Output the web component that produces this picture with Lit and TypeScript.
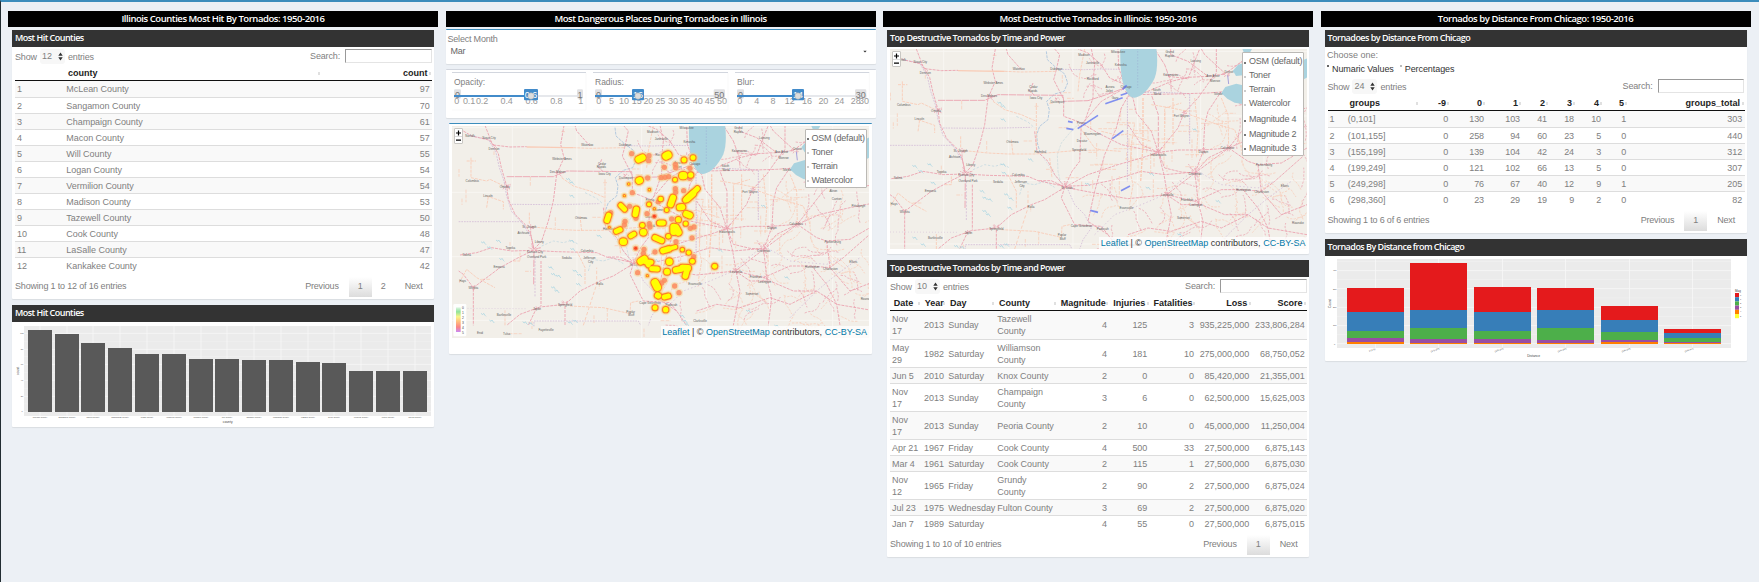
import { LitElement, html, svg, css } from "lit";
import { customElement, property } from "lit/decorators.js";

type Col = { label: string; width: number; align?: "r"; sort?: boolean };
type Line = { c: string; p: string; w?: number; d?: string };

const RED = "#eba0ae";
const ORANGE = "#f9cbb6";
const PURPLE = "#d5bfd9";
const RIVER = "#aac4dd";

/* ---------- base map geometry ---------- */

const borders: Line[] = [
  { c: PURPLE, p: "6,292 195,292", d: "5 3" },
  { c: PURPLE, p: "165,240 300,241 430,238", d: "5 3" },
  { c: PURPLE, p: "718,150 719,300 718,400", d: "5 3", w: 3 },
  { c: PURPLE, p: "738,133 820,133 905,137 905,290", d: "5 3", w: 3 },
  { c: PURPLE, p: "235,400 235,520", d: "6 4" },
  { c: PURPLE, p: "232,606 232,590 545,590 552,603", d: "5 3" },
  { c: PURPLE, p: "6,552 210,553", d: "2 7" },
  { c: PURPLE, p: "515,64 590,65 640,63 700,64", d: "5 3" },
  { c: PURPLE, p: "45,35 95,45 118,85 128,130 142,170 150,215 165,262 200,300 220,335", d: "6 3" },
  { c: PURPLE, p: "540,425 560,470 590,500 610,540 585,575 575,603", d: "5 4" },
  { c: PURPLE, p: "620,560 680,500 760,470 830,440 900,380 930,370 1000,410 1110,420 1160,400", d: "4 7" },
  { c: PURPLE, p: "1000,580 1080,500 1140,450 1210,400", d: "5 5" },
];

const rivers: Line[] = [
  { c: RIVER, p: "475,10 478,35 500,55 530,78 539,105 528,130 500,138 476,160 484,185 480,215 455,235 446,260 448,285 456,312" },
  { c: "#d3dfe0", p: "575,225 545,255 520,285 508,320 510,370 518,405", d: "8 3" },
  { c: "#c9dbe2", p: "395,440 405,405 440,410 470,400 500,418", d: "8 4" },
  { c: "#c9dbe2", p: "385,205 420,222 440,240", d: "8 5" },
  { c: "#c9dbe2", p: "255,365 290,350 320,355 345,348 365,360", d: "7 5" },
  { c: "#dadfe6", p: "455,312 480,350 500,380 520,405", d: "5 4" },
];

const roads: Line[] = [
  { c: RED, p: "20,20 45,35 100,48 125,88 134,130 150,185 155,225 175,270 205,300 222,330 232,375" },
  { c: RED, p: "85,3 105,55 120,70" },
  { c: RED, p: "150,157 290,157 305,150 330,140 525,142 527,160 600,158 655,140 715,118", d: "22 2" },
  { c: RED, p: "322,3 312,60 322,100 300,150 290,230 275,290 255,350 232,375" },
  { c: RED, p: "10,392 60,385 105,370 165,380 230,378 300,382 420,385 450,398 530,415" },
  { c: RED, p: "530,418 470,455 430,470 370,500 325,540 250,548 190,570 150,603" },
  { c: RED, p: "230,378 185,400 130,430 50,490 50,603" },
  { c: RED, p: "50,490 20,450 6,440" },
  { c: RED, p: "253,410 253,545" },
  { c: RED, p: "232,380 231,480", d: "22 4" },
  { c: RED, p: "232,375 222,330 222,300" },
  { c: RED, p: "530,418 552,370 575,340 577,290 580,230 640,160 711,120" },
  { c: RED, p: "527,160 527,205 555,215 580,225 630,255 700,290 811,313" },
  { c: RED, p: "440,250 447,310 480,340 500,380 525,410" },
  { c: RED, p: "530,418 600,380 690,350 760,330 811,313 870,306 945,306 1022,300 1090,270 1180,250 1257,235" },
  { c: RED, p: "711,130 735,150 745,195 790,250 811,313 828,380 838,440 850,500 830,603" },
  { c: RED, p: "530,418 620,435 720,452 836,440 920,460 1000,425 1065,425 1120,430 1160,400 1245,325" },
  { c: RED, p: "1000,130 960,190 950,230 946,308 921,375 930,460 945,520 935,603" },
  { c: RED, p: "1200,120 1100,200 1022,300 921,375 836,440" },
  { c: RED, p: "811,313 870,240 888,195 930,150 965,100 985,75 985,3" },
  { c: RED, p: "725,135 700,180 685,240 650,320 620,430 600,520 660,560 690,603" },
  { c: RED, p: "711,110 692,60 690,3" },
  { c: RED, p: "720,145 780,130 850,100 900,88 960,85 1010,78 1090,20" },
  { c: RED, p: "740,140 860,138 960,135 1000,132 1060,170 1200,190 1257,180" },
  { c: RED, p: "711,110 665,90 640,50 600,15 570,3" },
  { c: RED, p: "505,65 497,95 525,150" },
  { c: RED, p: "505,65 515,20 500,3" },
  { c: RED, p: "610,3 620,50 616,90 615,150 590,220" },
  { c: RED, p: "400,65 360,20 355,3" },
  { c: RED, p: "435,105 425,130 440,142" },
  { c: RED, p: "530,415 600,412 680,395 760,370 830,380 921,372" },
  { c: RED, p: "530,418 520,450 545,500 560,530 640,535 660,560" },
  { c: RED, p: "325,545 325,603" },
  { c: RED, p: "240,550 215,603" },
  { c: RED, p: "530,418 490,398 450,398" },
  { c: RED, p: "811,313 830,360 880,372 921,375 960,330 1022,300" },
  { c: RED, p: "811,313 760,290 720,230" },
  { c: RED, p: "811,313 811,200 790,140", d: "12 4" },
  { c: RED, p: "720,560 780,540 850,550 940,520 1000,540 1080,500 1140,540 1257,560" },
  { c: RED, p: "1065,425 1110,480 1140,540 1150,603" },
  { c: RED, p: "836,440 880,470 940,470 1010,500 1080,500" },
  { c: RED, p: "1110,350 1120,430 1180,500 1257,470" },
  { c: RED, p: "1022,300 1080,340 1110,350 1180,345 1257,300" },
  { c: RED, p: "800,3 830,50 848,100 850,130", d: "14 3" },
  { c: RED, p: "848,3 848,20 900,40 960,85" },
  { c: RED, p: "840,85 900,92 920,40 935,3" },
  { c: RED, p: "940,3 950,20 1010,75" },
  { c: ORANGE, p: "210,68 350,70", w: 4, d: "40 0" },
  { c: RED, p: "110,62 160,68 210,67" },
  { c: ORANGE, p: "350,70 400,72 505,70" },
  { c: ORANGE, p: "43,100 43,160 90,170 100,165 142,185" },
  { c: ORANGE, p: "30,110 58,110" },
  { c: ORANGE, p: "90,215 140,232 140,255" },
  { c: ORANGE, p: "90,250 95,215" },
  { c: ORANGE, p: "315,160 350,185 400,200 445,220" },
  { c: ORANGE, p: "445,165 445,300" },
  { c: ORANGE, p: "230,308 300,315 360,318 440,318 560,308 640,306" },
  { c: ORANGE, p: "218,265 218,300" },
  { c: ORANGE, p: "370,275 375,320" },
  { c: ORANGE, p: "485,330 492,390" },
  { c: ORANGE, p: "8,475 30,435 60,460 115,490" },
  { c: ORANGE, p: "145,603 145,555" },
  { c: ORANGE, p: "340,545 440,550 520,568" },
  { c: ORANGE, p: "520,568 522,535 545,530" },
  { c: ORANGE, p: "380,603 420,480 420,430", d: "10 6" },
  { c: ORANGE, p: "190,385 190,410 170,410" },
  { c: ORANGE, p: "360,380 385,430 385,480" },
  { c: ORANGE, p: "720,225 740,225 730,290 728,380 735,410 725,470" },
  { c: ORANGE, p: "765,150 765,290 758,400", w: 4 },
  { c: ORANGE, p: "790,170 850,180 900,190" },
  { c: ORANGE, p: "855,150 855,290", w: 3 },
  { c: ORANGE, p: "830,300 830,180 880,165" },
  { c: ORANGE, p: "590,3 575,80 570,130" },
  { c: ORANGE, p: "905,200 990,230 1040,245 1060,300" },
  { c: ORANGE, p: "920,150 930,250 925,330" },
  { c: ORANGE, p: "1000,150 1020,200 1022,300" },
  { c: ORANGE, p: "640,250 690,262 720,258 790,280" },
  { c: ORANGE, p: "570,230 620,300 640,306 700,310" },
];

const radialHubs: [number, number, number][] = [
  [232, 376, 30], [530, 415, 32], [712, 118, 28], [811, 313, 22], [145, 185, 18],
  [921, 370, 24], [305, 148, 16], [1022, 300, 20], [836, 440, 18], [946, 306, 14],
  [690, 95, 18], [885, 198, 14], [1015, 78, 18], [925, 465, 16], [325, 538, 14],
  [240, 552, 10], [50, 490, 9], [222, 306, 12], [510, 155, 12],
];

const cities: [number, number, string][] = [
  [40, 36, "Norfolk"], [97, 41, "Sioux City"], [112, 74, "Denison"], [392, 62, "Waterloo"], [505, 62, "Dubuque"],
  [316, 104, "Webster Ames"], [303, 143, "Des Moines"], [436, 118, "Cedar"], [434, 129, "Rapids"],
  [444, 149, "Iowa City"], [508, 161, "Davenport"], [144, 188, "Omaha"], [47, 170, "Columbus"],
  [94, 214, "Lincoln"], [373, 282, "Ottumwa"], [218, 308, "St. Joseph"], [200, 326, "Atchison"], [457, 313, "Hannibal"],
  [573, 306, "Springfield"], [248, 352, "Liberty"], [235, 382, "Kansas City"], [240, 399, "Overland Park"],
  [161, 372, "Topeka"], [391, 380, "Columbia"], [330, 402, "Sedalia"], [398, 402, "Jefferson"], [402, 414, "City"],
  [30, 391, "Salina"], [127, 429, "Emporia"], [50, 491, "Wichita"], [18, 469, "Hays"], [537, 421, "St. Louis"],
  [429, 478, "Rolla"], [325, 543, "Springfield"], [241, 555, "Joplin"], [142, 571, "Bartlesville"],
  [522, 562, "Poplar"], [524, 573, "Bluff"], [580, 535, "Cape Girardeau"], [613, 257, "Bloomington"],
  [580, 226, "Peoria"], [582, 279, "Decatur"], [588, 22, "Madison"], [614, 44, "Janesville"], [614, 93, "Rockford"],
  [690, 12, "Milwaukee"], [698, 52, "Kenosha"], [714, 118, "Chicago"], [666, 116, "Aurora"], [664, 129, "Joliet"],
  [681, 150, "Gary"], [806, 126, "South"], [808, 137, "Bend"], [848, 80, "Kalamazoo"], [845, 12, "Grand"],
  [845, 23, "Rapids"], [923, 40, "Lansing"], [975, 83, "Ann Arbor"], [981, 100, "Monroe"], [1023, 73, "Detroit"],
  [990, 137, "Toledo"], [880, 203, "Fort Wayne"], [811, 322, "Indianapolis"], [946, 312, "Dayton"],
  [1018, 299, "Columbus"], [921, 379, "Cincinnati"], [838, 442, "Louisville"], [897, 457, "Frankfort"],
  [924, 472, "Lexington"], [1066, 427, "Huntington"], [1121, 433, "Charleston"], [1128, 352, "Parkersburg"],
  [715, 479, "Evansville"], [644, 543, "Paducah"], [1190, 413, "Elkins"], [886, 510, "Somerset"],
  [1230, 525, "Roanoke"], [730, 590, "Clarksville"],
];
const outerCities: [number, number, string][] = [
  [1130, 200, "Akron"], [1140, 225, "Canton"], [1205, 245, "Pittsburgh"],
  [70, 625, "Enid"], [268, 618, "Fayetteville"], [150, 628, "Tulsa"],
];

const ponds: [number, number][] = [
  [335, 165], [345, 175], [345, 215], [427, 335], [345, 350], [80, 355], [98, 370], [135, 405], [125, 350],
  [282, 430], [290, 450], [305, 455], [355, 440], [368, 452], [365, 480], [290, 490], [300, 500], [348, 375],
  [105, 590], [80, 570], [205, 595], [222, 598], [340, 595], [355, 590], [598, 408], [920, 245], [790, 378],
  [676, 575], [684, 590], [690, 600], [780, 420], [990, 460], [960, 605], [875, 560],
];

/** Small deterministic generator, so that minor roads are stable between renders. */
function* noise(seed: number): Generator<number> {
  let s = seed;
  for (;;) {
    s = (s * 1664525 + 1013904223) % 4294967296;
    yield s / 4294967296;
  }
}

function minorRoads(): Line[] {
  const g = noise(41);
  const n = () => g.next().value as number;
  const out: Line[] = [];
  const wander = (x: number, y: number, len: number, steps: number, c: string) => {
    let a = n() * Math.PI * 2;
    let p = `${x.toFixed(0)},${y.toFixed(0)}`;
    for (let i = 0; i < steps; i++) {
      a += (n() - 0.5) * 1.1;
      x += Math.cos(a) * len;
      y += Math.sin(a) * len;
      p += ` ${x.toFixed(0)},${y.toFixed(0)}`;
    }
    out.push({ c, p, d: "7 4" });
  };
  const ortho = (x: number, y: number, len: number) => {
    const v = n() > 0.5;
    out.push({ c: ORANGE, p: `${x},${y} ${v ? x : x + len},${v ? y + len : y}`, d: "11 4" });
  };
  for (let i = 0; i < 30; i++) ortho(Math.round(n() * 620), Math.round(n() * 630), 12 + n() * 30);
  for (let i = 0; i < 50; i++) ortho(Math.round(600 + n() * 420), Math.round(160 + n() * 240), 20 + n() * 50);
  for (let i = 0; i < 70; i++) wander(850 + n() * 400, 380 + n() * 255, 12, 5, n() > 0.3 ? ORANGE : RED);
  for (let i = 0; i < 24; i++) wander(640 + n() * 240, 400 + n() * 230, 13, 5, n() > 0.4 ? ORANGE : RED);
  for (let i = 0; i < 26; i++) wander(960 + n() * 300, 160 + n() * 230, 16, 6, n() > 0.5 ? ORANGE : RED);
  for (let i = 0; i < 9; i++) wander(820 + n() * 200, 10 + n() * 120, 14, 5, RED);
  for (let i = 0; i < 8; i++) wander(560 + n() * 90, 10 + n() * 140, 12, 4, RED);
  for (const [x, y, r] of radialHubs) {
    for (let k = 0; k < 7; k++) {
      const a = n() * Math.PI * 2;
      const q = r * (0.5 + n() * 0.6);
      out.push({
        c: RED,
        p: `${(x + Math.cos(a) * 4).toFixed(0)},${(y + Math.sin(a) * 3).toFixed(0)} ${(x + Math.cos(a) * q).toFixed(0)},${(y + Math.sin(a) * q * 0.8).toFixed(0)}`,
        d: "8 2",
      });
    }
  }
  return out;
}

const minors = minorRoads();
const line = (l: Line) => svg`<polyline points=${l.p} fill="none" stroke=${l.c}
  stroke-width=${l.w ?? 2.6} stroke-dasharray=${l.d ?? "9 3"}></polyline>`;

const baseMap = (names: [number, number, string][]) => svg`
  <rect x="-20" y="0" width="1290" height="650" fill="#f2efe9"></rect>
  <g stroke="#f8f6f2" stroke-width="3">
    <path d="M167 0V650M361 0V650M555 0V650M749 0V650M938 0V650M1128 0V650M-20 10H1262M-20 204H1262M-20 397H1262M-20 588H1262" fill="none"></path>
  </g>
  <g opacity=".8">${minors.map(line)}</g>
  ${borders.map(line)}${rivers.map(line)}
  ${roads.map(line)}
  <g fill="#aad3df">
    <path d="M697 0C696 50 699 80 705 105C713 130 722 149 738 149C765 148 790 112 800 90C809 68 809 30 805 0Z"></path>
    <path d="M1000 135L1012 117L1045 107L1100 120L1150 80L1240 38L1262 30V86L1210 115L1140 150L1064 168L1040 164L1018 152Z"></path>
    <path d="M1035 68L1050 50L1068 45L1080 80L1044 84Z"></path>
    <path d="M1062 0H1094L1085 15L1068 14Z"></path>
  </g>
  <path d="M749 0V120" stroke="#9fb6d6" stroke-width="2" stroke-dasharray="5 4"></path>
  <path d="M1019 82L1022 108" stroke="#a7a2dc" stroke-width="3"></path>
  <g fill="none" stroke="#a9d6e2" stroke-width="2.4">
    ${ponds.map(([x, y]) => svg`<path d=${`M${x - 7} ${y - 3}l5 4l3 -4l4 6l3 3`}></path>`)}
  </g>
  <g font-size="9" fill="#5c5c5c" text-anchor="middle" font-family="Liberation Sans, sans-serif">
    ${names.map(([x, y, t]) => svg`<text x=${x} y=${y + 3}>${t}</text>`)}
  </g>`;

/* ---------- heat map ---------- */

const hot: number[][] = [
  [131, 43, 142, 38, 20], [213, 33, 219, 30, 22], [267, 45, 267, 45, 15], [294, 38, 294, 38, 15], [132, 107, 134, 106, 20],
  [240, 104, 240, 104, 12], [263, 92, 266, 92, 22], [287, 90, 287, 90, 16], [197, 162, 197, 162, 14], [162, 178, 162, 178, 12],
  [234, 158, 227, 178, 18], [307, 131, 271, 165, 15], [294, 146, 276, 162, 19], [254, 187, 262, 186, 18], [274, 207, 284, 211, 19], [250, 224, 250, 224, 16],
  [272, 236, 272, 236, 13], [77, 181, 89, 193, 14], [124, 193, 121, 208, 17], [41, 211, 36, 226, 16], [64, 259, 75, 254, 15],
  [117, 267, 107, 273, 14], [142, 241, 142, 241, 14], [145, 262, 145, 262, 20], [193, 234, 205, 234, 15], [215, 195, 215, 195, 12],
  [236, 246, 236, 260, 20], [243, 248, 250, 262, 20], [180, 278, 200, 287, 16], [220, 274, 220, 274, 14], [84, 290, 86, 290, 20],
  [204, 317, 221, 312, 17], [221, 312, 241, 306, 12], [262, 314, 262, 314, 11], [281, 323, 281, 323, 13], [292, 349, 292, 349, 15],
  [137, 349, 148, 342, 20], [150, 350, 168, 352, 15], [158, 357, 160, 360, 14], [170, 371, 187, 372, 15], [223, 350, 223, 350, 20], [216, 380, 216, 380, 18],
  [242, 375, 258, 372, 17], [262, 368, 279, 369, 18], [277, 371, 271, 393, 17], [180, 413, 187, 427, 22], [188, 451, 190, 452, 17],
  [208, 456, 220, 453, 15], [180, 488, 180, 488, 15], [212, 494, 212, 494, 16], [359, 364, 359, 364, 15],
  [101, 117, 101, 117, 5], [88, 152, 88, 152, 4], [163, 134, 163, 134, 5], [178, 191, 178, 191, 4], [43, 247, 43, 247, 3],
  [157, 392, 157, 392, 4],
];
const warm: number[][] = [
  [110, 26], [162, 32], [161, 47], [208, 67], [241, 58], [285, 70], [158, 99], [198, 98], [210, 97], [221, 95], [241, 131],
  [242, 142], [266, 137], [112, 143], [104, 184], [47, 203], [90, 229], [156, 206], [88, 240], [163, 236], [165, 246], [230, 222],
  [297, 246], [286, 250], [291, 279], [243, 290], [147, 313], [145, 325], [180, 321], [128, 383], [208, 406], [200, 414], [239, 423],
  [252, 443], [178, 214], [122, 310], [242, 68], [284, 100], [123, 220], [190, 170], [296, 335],
];
const seg = (h: number[], extra: number, k: string, o: number) => svg`<path d=${`M${h[0]} ${h[1]}L${h[2] + 0.1} ${h[3]}`}
  stroke=${k} stroke-opacity=${o} stroke-width=${h[4] + extra} stroke-linecap="round"></path>`;

const heat = svg`<g transform="translate(415 62)" fill="none">
  ${hot.map((h) => seg(h, 18, "#f6d98a", 0.3))}
  ${warm.map(([x, y]) => svg`<circle cx=${x} cy=${y} r="12" fill="#f7cf7a" fill-opacity=".4"></circle>`)}
  ${hot.map((h) => seg(h, 12, "#ffc04a", 0.55))}
  ${warm.map(([x, y]) => svg`<circle cx=${x} cy=${y} r="8" fill="#fb8a5e" fill-opacity=".85"></circle>`)}
  ${hot.map((h) => seg(h, 6, "#ff6a2a", 0.95))}
  <circle cx="178" cy="214" r="4.5" fill="#f8441c"></circle><circle cx="122" cy="310" r="4.5" fill="#f8441c"></circle>
  ${hot.map((h) => seg(h, 1.6, "#ffa510", 1))}
  ${hot.map((h) => seg(h, -0.6, "#ffff00", 1))}
</g>`;

const tracks = svg`<g stroke="#5a6ff0" stroke-opacity=".75" stroke-width="5" fill="none">
  <path d="M569 242L630 202M535 241L556 245M540 220L554 223M652 167L704 149M698 142L718 135M704 124L716 112M673 272L706 248M699 428L726 414M607 487L630 493"></path>
</g>`;

const mapLegend = svg`<g transform="translate(-50 -28)">
  <rect x="40" y="567" width="39" height="97" rx="4" fill="#fff" fill-opacity=".9"></rect>
  <defs><linearGradient id="scale" x1="0" y1="0" x2="0" y2="1">
    <stop offset="0" stop-color="#dff5e4"></stop><stop offset=".18" stop-color="#8fe39a"></stop><stop offset=".38" stop-color="#f9f58a"></stop>
    <stop offset=".58" stop-color="#ffbe7d"></stop><stop offset=".8" stop-color="#fb8484"></stop><stop offset="1" stop-color="#c98bf5"></stop>
  </linearGradient></defs>
  <rect x="48" y="577" width="14" height="74" fill="url(#scale)"></rect>
  <g font-size="10" fill="#444" font-family="Liberation Sans, sans-serif">
    ${[0, 1, 2, 3, 4, 5].map((v) => svg`<text x="66" y=${581 + v * 15}>${v}</text>`)}
  </g>
</g>`;

/* ---------- elements ---------- */

const shared = css`
  :host { display: block; }
  * { box-sizing: border-box; }
  .box {
    background: #fff; border-radius: 1px; box-shadow: 0 1px 1px rgba(0, 0, 0, .08);
    display: flex; flex-direction: column;
  }
  .head {
    height: 17px; background: #333; color: #fff; padding-left: 3px;
    font: 600 9px/16px "Open Sans", "Noto Sans", sans-serif; letter-spacing: -.52px; white-space: nowrap;
  }
`;

@customElement("data-table")
class DataTable extends LitElement {
  @property({ attribute: false }) cols: Col[] = [];
  @property({ attribute: false }) rows: (string | number)[][] = [];
  @property() size = "10";
  @property() info = "";
  @property({ attribute: false }) pages: number[] = [1];

  static styles = [shared, css`
    .wrap { padding: 0 2.5px 0 3px; }
    .tools { display: flex; height: 18px; padding-top: 2px; align-items: flex-start; white-space: nowrap; letter-spacing: -.15px; }
    .tools span { line-height: 16px; }
    .pick {
      display: flex; align-items: center; gap: 6px; height: 15px; padding: 0 2px; margin: 0 3px;
      background: #f7f7f7; border-radius: 3px; line-height: 15px; min-width: 25px; letter-spacing: 0;
    }
    .search { margin-left: auto; display: flex; gap: 5px; align-items: flex-start; }
    .search span { line-height: 14px; }
    .search input {
      width: 86.5px; height: 14px; border: 1px solid; border-color: #999 #e4e4e4 #e4e4e4 #999;
      margin: 0; padding: 0 2px; background: #fff; outline: none; font: inherit;
    }
    table { width: 417px; table-layout: fixed; border-collapse: separate; border-spacing: 0; letter-spacing: -.04px; }
    th {
      height: 16px; padding: 0 4.5px 0 3.8px; line-height: 12px; font-weight: 700; color: #222; text-align: left;
      border-bottom: 1px solid #111; white-space: nowrap; position: relative; letter-spacing: 0;
    }
    th.r { text-align: right; }
    th.s::after { content: ""; position: absolute; right: 1px; top: 7px; width: 2px; height: 3px; background: #e0e0e0; }
    td { height: 16px; padding: 0 2.4px 0 2px; line-height: 12px; border-top: 1px solid #ddd; }
    tr.tall td { height: 28px; }
    tbody tr:first-child td { border-top: 0; }
    tbody tr:nth-child(odd) td { background: #f9f9f9; }
    td.r { text-align: right; }
    .foot { display: flex; height: 26px; padding-top: 3.5px; line-height: 18px; white-space: nowrap; letter-spacing: -.18px; }
    .pager { margin-left: auto; display: flex; padding-right: 9px; }
    .pager .p { width: 23px; height: 20.5px; text-align: center; line-height: 18px; }
    .pager .p.on { background: linear-gradient(#fff, #dcdcdc); margin-left: 10px; }
    .pager .n { margin-left: 10px; }
  `];

  render() {
    return html`<div class="wrap">
      <div class="tools">
        <span>Show</span>
        <div class="pick">${this.size}<svg width="5" height="9" viewBox="0 0 5 9"><path d="M.3 3.7L2.5.6L4.7 3.7ZM.3 5.3L2.5 8.4L4.7 5.3Z" fill="#333"></path></svg></div>
        <span>entries</span>
        <div class="search"><span>Search:</span><input type="text" aria-label="Search"></div>
      </div>
      <table>
        <colgroup>${this.cols.map((c) => html`<col style="width:${c.width}px">`)}</colgroup>
        <thead><tr>${this.cols.map((c) => html`<th class="${c.align ?? ""} ${c.label ? "s" : ""}">${c.label}</th>`)}</tr></thead>
        <tbody>${this.rows.map((r) => html`<tr class=${this.isTall(r) ? "tall" : ""}>${r.map((v, i) => html`<td class=${this.cols[i].align ?? ""}>${this.cell(v)}</td>`)}</tr>`)}</tbody>
      </table>
      <div class="foot"><span>${this.info}</span>
        <div class="pager"><span>Previous</span>
          ${this.pages.map((p) => html`<span class="p ${p === 1 ? "on" : ""}">${p}</span>`)}
          <span class="n">Next</span></div>
      </div>
    </div>`;
  }

  private isTall(r: (string | number)[]) {
    return r.some((v) => String(v).includes("\n"));
  }

  private cell(v: string | number) {
    const parts = String(v).split("\n");
    return parts.length > 1 ? html`${parts[0]}<br>${parts[1]}` : v;
  }
}

@customElement("leaflet-map")
class LeafletMap extends LitElement {
  @property() kind: "heat" | "tracks" = "heat";

  static styles = [shared, css`
    .map { position: relative; width: 417px; overflow: hidden; }
    .heat { height: 212px; }
    .tracks { height: 200px; }
    .map > svg { display: block; width: 100%; height: 100%; }
    .zoom {
      position: absolute; left: 2px; top: 2px; width: 9px; height: 16px; background: #fff;
      border: 1px solid #c9c7c3; border-radius: 1px;
    }
    .zoom svg { display: block; }
    .layers {
      position: absolute; right: 2px; top: 2.5px; width: 62px; background: #fff; border: 1px solid #bbb9b5;
      border-radius: 1px; padding: 1px 0 0 1px; color: #666;
    }
    .tracks .layers { right: 3px; top: 3px; }
    .layers div { display: flex; align-items: center; gap: 3px; height: 14.1px; white-space: nowrap; letter-spacing: -.2px; }
    .layers i { width: 2px; height: 2px; margin-top: 3px; background: #ccc; flex: none; }
    .layers .on i { background: #777; }
    .layers .sep { margin-top: 2px; }
    .attr {
      position: absolute; right: 0; bottom: 0; height: 12px; padding: 0 1.5px; line-height: 12px;
      background: rgba(255, 255, 255, .75); color: #333; white-space: nowrap; letter-spacing: .02px;
    }
    .attr a { color: #0078a8; }
  `];

  render() {
    const isHeat = this.kind === "heat";
    const extra = ["Magnitude 4", "Magnitude 2", "Magnitude 3"];
    return html`<div class="map ${this.kind}">
      <svg viewBox=${isHeat ? "-14 5 1251 636" : "6 3 1251 600"} preserveAspectRatio="none">
        ${baseMap(isHeat ? [...cities, ...outerCities] : cities)}${isHeat ? svg`${heat}${mapLegend}` : tracks}
      </svg>
      <div class="zoom"><svg width="7" height="14" viewBox="0 0 7 14"><path d="M1 4H6M3.5 1.5V6.5M1 11.2H6" stroke="#000" stroke-width="1.2"></path><path d="M0 7.5H7" stroke="#ccc" stroke-width=".7"></path></svg></div>
      <div class="layers">
        ${["OSM (default)", "Toner", "Terrain", "Watercolor"].map((t, i) => html`<div class=${i ? "" : "on"}><i></i>${t}</div>`)}
        ${isHeat ? "" : extra.map((t, i) => html`<div class="on ${i ? "" : "sep"}"><i></i>${t}</div>`)}
      </div>
      <div class="attr"><a>Leaflet</a> | © <a>OpenStreetMap</a> contributors, <a>CC-BY-SA</a></div>
    </div>`;
  }
}

type Slider = { x: number; w: number; label: string; max: string; maxW: number; val: string; at: number; ticks: [number, string][] };
const sliders: Slider[] = [
  { x: 36, w: 402, label: "Opacity:", max: "1", maxW: 18, val: "0.6", at: 273, ticks: [[50, "0"], [87, "0.1"], [126, "0.2"], [200, "0.4"], [275, "0.6"], [349, "0.8"], [422, "1"]] },
  { x: 459, w: 405, label: "Radius:", max: "50", maxW: 34, val: "16", at: 594, ticks: [[476, "0"], [514, "5"], [552, "10"], [590, "15"], [625, "20"], [661, "25"], [699, "30"], [735, "35"], [773, "40"], [809, "45"], [846, "50"]] },
  { x: 885, w: 403, label: "Blur:", max: "30", maxW: 34, val: "14", at: 1074, ticks: [[899, "0"], [950, "4"], [999, "8"], [1049, "12"], [1101, "16"], [1150, "20"], [1198, "24"], [1247, "28"], [1272, "30"]] },
];

const countyBars: [number, number, string][] = [
  [84, 180, "McLean County"], [165, 192, "Sangamon County"], [243, 219, "Macon County"], [324, 234, "Champaign County"],
  [405, 252, "Logan County"], [486, 252, "Vermilion County"], [567, 267, "Madison County"], [645, 267, "Will County"],
  [726, 270, "Tazewell County"], [807, 270, "Kankakee County"], [888, 276, "LaSalle County"], [966, 279, "Cook County"],
  [1047, 303, "Iroquois County"], [1128, 303, "Fulton County"], [1209, 303, "Peoria County"],
];
const palette = ["#e41a1c", "#377eb8", "#4daf4a", "#984ea3", "#ff7f00", "#ffff33"];
const stacks: { x: number; t: number[]; l: string }[] = [
  { x: 96, t: [174, 246, 303, 324, 336, 342], l: "(0,101]" }, { x: 285, t: [99, 240, 294, 327, 339, 342], l: "(101,155]" },
  { x: 477, t: [171, 246, 303, 327, 339, 342], l: "(155,199]" }, { x: 666, t: [174, 240, 294, 330, 339, 342], l: "(199,249]" },
  { x: 858, t: [228, 270, 306, 330, 336, 342], l: "(249,298]" }, { x: 1047, t: [297, 309, 324, 336, 339, 342], l: "(298,360]" },
];

const num = (label: string, width: number): Col => ({ label, width, align: "r" });

@customElement("app-root")
class AppRoot extends LitElement {
  static styles = [shared, css`
    :host { font: 9px/12px "Liberation Sans", Arial, sans-serif; color: #808080; }
    .page {
      width: 1759px; height: 582px; background: #ecf0f5; border-top: 2px solid #3c8dbc; border-left: 1px solid #222d32;
      display: grid; grid-template-columns: 430px 430px 430px 430px; column-gap: 7.5px;
      padding: 9px 0 0 7px; align-items: start; overflow: hidden;
    }
    .col { display: flex; flex-direction: column; }
    h3 {
      margin: 0 0 3px; height: 16px; background: #000; color: #fff; text-align: center; white-space: nowrap;
      font: 600 9.5px/15px "Open Sans", "Noto Sans", sans-serif; letter-spacing: -.45px;
    }
    .in { margin: 0 4px 6px; }
    .in.last { margin-bottom: 0; }
    .chart { display: block; width: 422px; height: 105px; }
    .month { border-top: 1px solid #3c8dbc; height: 35px; margin: -1px 0 5px; padding: 3px 2px 0; letter-spacing: -.2px; }
    .month .sel { display: flex; justify-content: space-between; align-items: center; padding: 0 7px 0 3px; color: #666; }
    .month .sel svg { display: block; }
    .range { border-top: 1px solid #d2d6de; height: 49px; margin-bottom: 5px; }
    .range svg { display: block; width: 430px; height: 48px; }
    .mapbox { border-top: 1px solid #3c8dbc; margin: 0 4px 0 3px; height: 231px; padding: 2px 3px; }
    .trackbox { padding: 2px 3px 5px; }
    .choose { height: 30px; padding: 2px 0 0 2.5px; }
    .choose .opts { display: flex; gap: 6px; color: #333; height: 14px; align-items: center; margin-top: 1px; letter-spacing: -.08px; }
    .choose .opt { display: flex; gap: 3px; }
    .choose i { width: 2px; height: 2px; background: #bbb; margin-top: 2px; }
    .choose .opt:first-child i { background: #666; }
  `];

  private barChart() {
    return html`<svg class="chart" viewBox="36 156 1266 315" preserveAspectRatio="none">
      <rect x="72" y="168" width="1221" height="270" fill="#ebebeb"></rect>
      <path d="M72 190H1293M72 238H1293M72 283H1293M72 331H1293M72 379H1293M72 424H1293" stroke="#f7f7f7" stroke-width="2.4"></path>
      <path d="M72 214H1293M72 260H1293M72 307H1293M72 355H1293M72 402H1293" stroke="#f1f1f1" stroke-width="1.6"></path>
      ${countyBars.map(([x]) => svg`<path d=${`M${x + 36} 168V438`} stroke="#f7f7f7" stroke-width="2.4"></path>`)}
      ${countyBars.map(([x, y]) => svg`<rect x=${x} y=${y} width="72" height=${426 - y} fill="#595959"></rect>`)}
      <g font-family="Liberation Sans, sans-serif" font-size="6.2" fill="#444" text-anchor="middle">
        ${countyBars.map(([x, , t]) => svg`<text x=${x + 36} y="444">${t}</text>`)}
        ${[190, 238, 283, 331, 379, 424].map((y, i) => svg`<text x="66" y=${y + 2}>${100 - i * 20}</text>`)}
        <text x="683" y="459" font-size="10">county</text>
        <text transform="translate(57 303) rotate(-90)" font-size="10">count</text>
      </g>
    </svg>`;
  }

  private stackChart() {
    return html`<svg class="chart" viewBox="30 78 1266 315" preserveAspectRatio="none">
      <rect x="66" y="87" width="1182" height="267" fill="#ebebeb"></rect>
      <path d="M66 122H1248M66 176H1248M66 232H1248M66 287H1248M66 341H1248" stroke="#f7f7f7" stroke-width="2.4"></path>
      <path d="M66 95H1248M66 149H1248M66 204H1248M66 260H1248M66 314H1248" stroke="#f1f1f1" stroke-width="1.6"></path>
      ${stacks.map((s) => svg`<path d=${`M${s.x + 85.5} 87V354`} stroke="#f7f7f7" stroke-width="2.4"></path>`)}
      ${stacks.map((s) => s.t.slice(0, 5).map((y, i) => svg`<rect x=${s.x} y=${y} width="171" height=${s.t[i + 1] - y} fill=${palette[i]}></rect>`))}
      <g font-family="Liberation Sans, sans-serif" font-size="6.4" fill="#444" text-anchor="middle">
        ${stacks.map((s) => svg`<text transform=${`translate(${s.x + 76} 362) rotate(-20)`}>${s.l}</text>`)}
        ${[400, 300, 200, 100, 0].map((v, i) => svg`<text x="59" y=${124 + i * 55}>${v}</text>`)}
        <text x="656" y="380" font-size="10">Distance</text>
        <text transform="translate(47 221) rotate(-90)" font-size="10">Count</text>
        <text x="1269" y="186" font-size="9">Mag</text>
        ${palette.map((c, i) => svg`<rect x="1260" y=${189 + i * 12.6} width="12" height="12.6" fill=${c}></rect><text x="1277" y=${197 + i * 12.6}>${i}</text>`)}
      </g>
    </svg>`;
  }

  private ranges() {
    return html`<svg viewBox="18 210 1290 144" preserveAspectRatio="none" font-family="Liberation Sans, sans-serif" font-size="27">
      ${sliders.map((s) => {
        const l = s.x + 6;
        const r = s.x + s.w - 9;
        const two = s.val.length === 2;
        const bw = two ? 36 : 42;
        return svg`
          <rect x=${s.x} y="216" width=${s.w} height="3" fill="#d2d6de"></rect>
          <path d=${`M${s.x + s.w} 219V330H${s.x}`} fill="none" stroke="#f6f6f6" stroke-width="2"></path>
          <text x=${l} y="254" fill="#808080" font-size="25.5">${s.label}</text>
          <rect x=${l} y="285" width=${r - l} height="6" fill="#e6e8ec"></rect>
          <rect x=${l} y="268" width="21" height="28" rx="4" fill="#e1e1e3"></rect>
          <text x=${l + 3} y="294" fill="#777" font-size="27">0</text>
          <rect x=${r - s.maxW} y="268" width=${s.maxW} height="28" rx="4" fill="#e1e1e3"></rect>
          <text x=${r - s.maxW / 2} y="294" fill="#777" font-size="27" text-anchor="middle">${s.max}</text>
          <rect x=${l} y="285" width=${s.at - l} height="6" fill="#428bca"></rect>
          <g fill="#999" text-anchor="middle" letter-spacing="-.3">${s.ticks.map(([x, t]) => svg`<text x=${x} y="313">${t}</text>`)}</g>
          <rect x=${s.at - bw / 2} y="267" width=${bw} height="34" rx="3" fill="#428bca"></rect>
          <text x=${s.at} y="294" fill="#fff" font-size="27" text-anchor="middle">${s.val}</text>
          <circle cx=${s.at} cy="288" r="9.5" fill="#ddd" stroke="#aaa" stroke-width="1.5"></circle>`;
      })}
    </svg>`;
  }

  render() {
    return html`<div class="page">
      <section class="col">
        <h3>Illinois Counties Most Hit By Tornados: 1950-2016</h3>
        <div class="box in"><div class="head">Most Hit Counties</div>
          <data-table size="12" info="Showing 1 to 12 of 16 entries" .pages=${[1, 2]}
            .cols=${[{ label: "", width: 49.3 }, { label: "county", width: 257 }, num("count", 110.7)]}
            .rows=${[
              [1, "McLean County", 97], [2, "Sangamon County", 70], [3, "Champaign County", 61], [4, "Macon County", 57],
              [5, "Will County", 55], [6, "Logan County", 54], [7, "Vermilion County", 54], [8, "Madison County", 53],
              [9, "Tazewell County", 50], [10, "Cook County", 48], [11, "LaSalle County", 47], [12, "Kankakee County", 42],
            ]}></data-table></div>
        <div class="box in last"><div class="head">Most Hit Counties</div>${this.barChart()}</div>
      </section>

      <section class="col">
        <h3>Most Dangerous Places During Tornadoes in Illinois</h3>
        <div class="box month"><span>Select Month</span>
          <div class="sel"><span>Mar</span><svg width="4" height="3" viewBox="0 0 4 3"><path d="M.3 .7H3.7L2 2.6Z" fill="#333"></path></svg></div></div>
        <div class="box range">${this.ranges()}</div>
        <div class="box mapbox"><leaflet-map kind="heat"></leaflet-map></div>
      </section>

      <section class="col">
        <h3>Most Destructive Tornados in Illinois: 1950-2016</h3>
        <div class="box in"><div class="head">Top Destructive Tornados by Time and Power</div>
          <div class="trackbox"><leaflet-map kind="tracks"></leaflet-map></div></div>
        <div class="box in last"><div class="head">Top Destructive Tornados by Time and Power</div>
          <data-table size="10" info="Showing 1 to 10 of 10 entries"
            .cols=${[{ label: "Date", width: 31 }, num("Year", 25.3), { label: "Day", width: 49 }, { label: "County", width: 61.7 },
              num("Magnitude", 52.3), num("Injuries", 40.4), num("Fatalities", 46.6), num("Loss", 55.4), num("Score", 55.3)]}
            .rows=${[
              ["Nov\n17", 2013, "Sunday", "Tazewell\nCounty", 4, 125, 3, "935,225,000", "233,806,284"],
              ["May\n29", 1982, "Saturday", "Williamson\nCounty", 4, 181, 10, "275,000,000", "68,750,052"],
              ["Jun 5", 2010, "Saturday", "Knox County", 2, 0, 0, "85,420,000", "21,355,001"],
              ["Nov\n17", 2013, "Sunday", "Champaign\nCounty", 3, 6, 0, "62,500,000", "15,625,003"],
              ["Nov\n17", 2013, "Sunday", "Peoria County", 2, 10, 0, "45,000,000", "11,250,004"],
              ["Apr 21", 1967, "Friday", "Cook County", 4, 500, 33, "27,500,000", "6,875,143"],
              ["Mar 4", 1961, "Saturday", "Cook County", 2, 115, 1, "27,500,000", "6,875,030"],
              ["Nov\n12", 1965, "Friday", "Grundy\nCounty", 2, 90, 2, "27,500,000", "6,875,024"],
              ["Jul 23", 1975, "Wednesday", "Fulton County", 3, 69, 2, "27,500,000", "6,875,020"],
              ["Jan 7", 1989, "Saturday", "", 4, 55, 0, "27,500,000", "6,875,015"],
            ]}></data-table></div>
      </section>

      <section class="col">
        <h3>Tornados by Distance From Chicago: 1950-2016</h3>
        <div class="box in"><div class="head">Tornadoes by Distance From Chicago</div>
          <div class="choose"><div>Choose one:</div>
            <div class="opts"><span class="opt"><i></i>Numaric Values</span><span class="opt"><i></i>Percentages</span></div></div>
          <data-table size="24" info="Showing 1 to 6 of 6 entries"
            .cols=${[{ label: "", width: 18.3 }, { label: "groups", width: 73.7 }, num("-9", 31), num("0", 36), num("1", 36),
              num("2", 27), num("3", 27), num("4", 27), num("5", 25), num("groups_total", 116)]}
            .rows=${[
              [1, "(0,101]", 0, 130, 103, 41, 18, 10, 1, 303], [2, "(101,155]", 0, 258, 94, 60, 23, 5, 0, 440],
              [3, "(155,199]", 0, 139, 104, 42, 24, 3, 0, 312], [4, "(199,249]", 0, 121, 102, 66, 13, 5, 0, 307],
              [5, "(249,298]", 0, 76, 67, 40, 12, 9, 1, 205], [6, "(298,360]", 0, 23, 29, 19, 9, 2, 0, 82],
            ]}></data-table></div>
        <div class="box in last"><div class="head">Tornados By Distance from Chicago</div>${this.stackChart()}</div>
      </section>
    </div>`;
  }
}
